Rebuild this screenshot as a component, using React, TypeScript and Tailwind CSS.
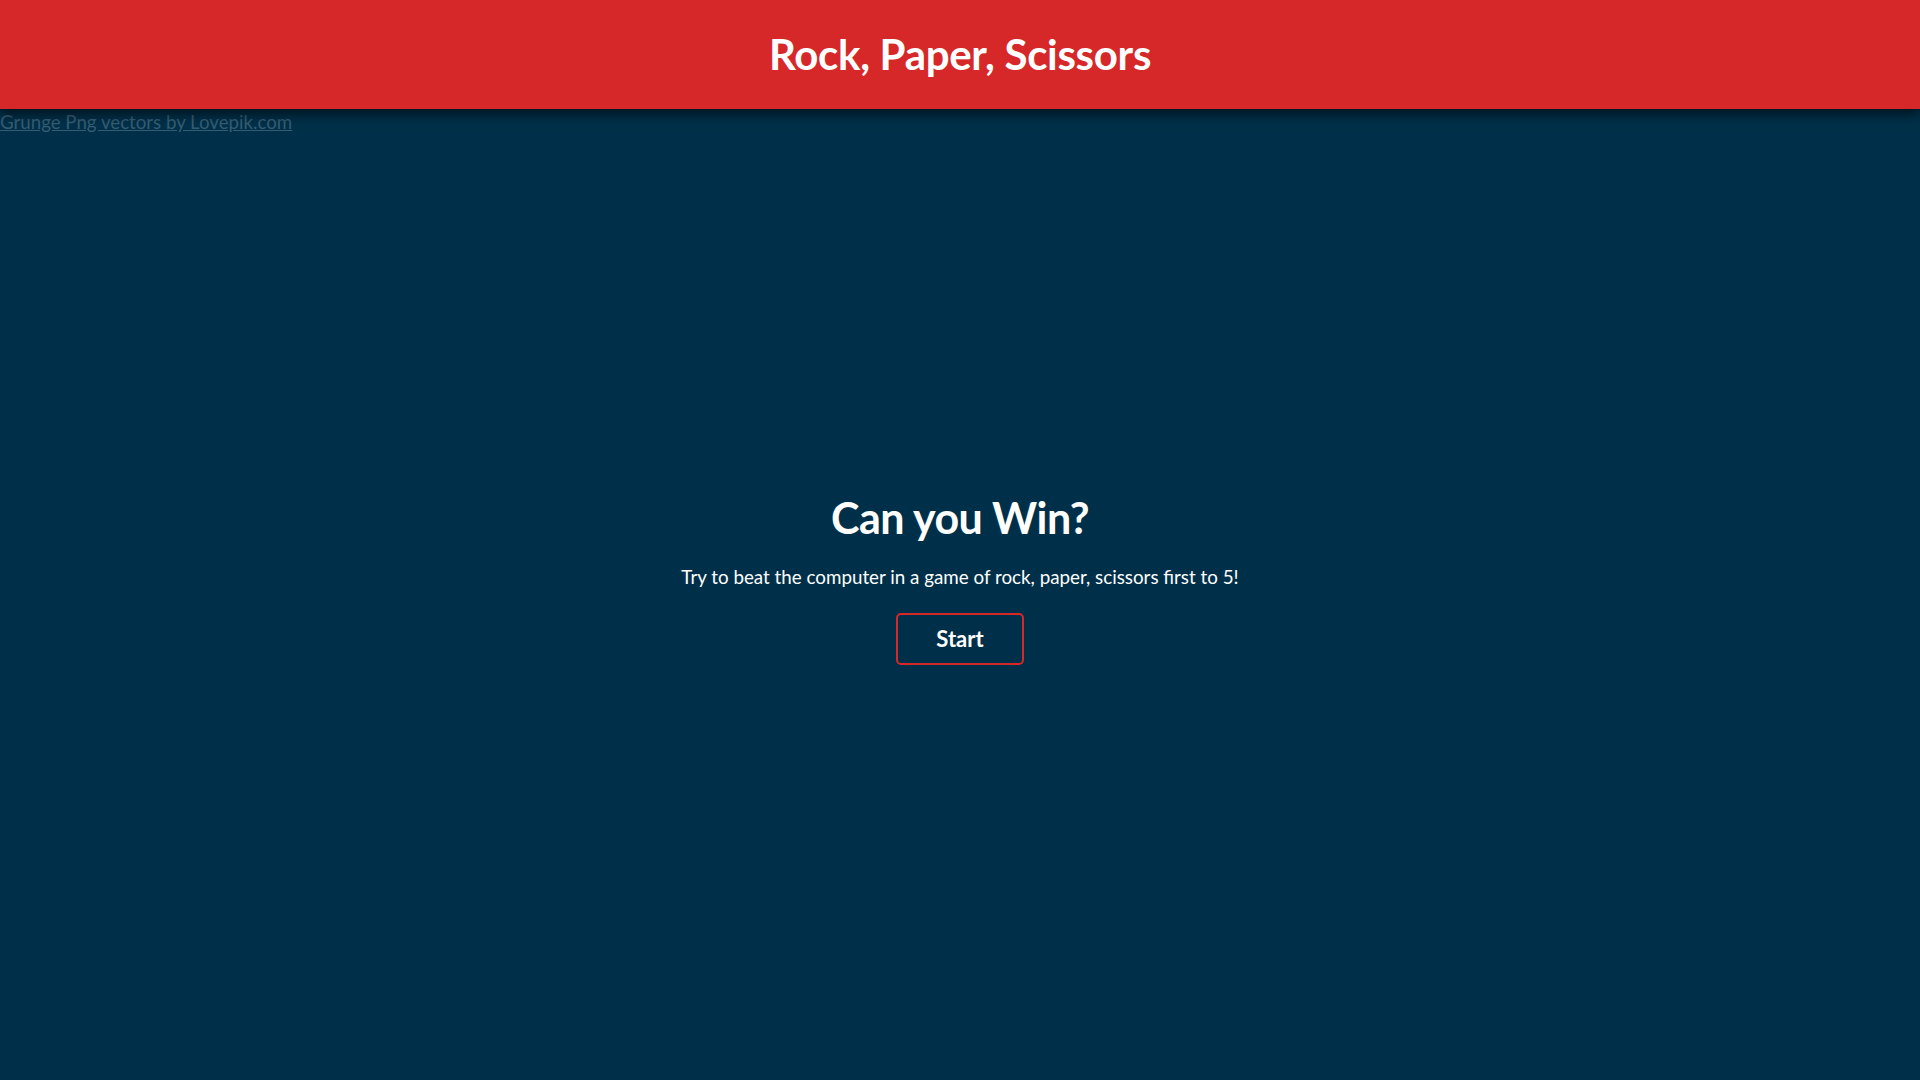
export default function App() {
  return (
    <div
      className="min-h-screen flex flex-col bg-[#003049] text-white"
      style={{ fontFamily: "Lato, 'Open Sans', sans-serif" }}
    >
      <header className="h-[109px] flex items-center justify-center bg-[#d62828] shadow-[0_4px_12px_rgba(0,0,0,0.7)] relative z-10">
        <h1 className="text-[42px] font-bold tracking-[-0.3px]">Rock, Paper, Scissors</h1>
      </header>
      <div className="h-[27px] text-[18.7px] leading-[26px]">
        <a href="#" className="text-[#365d74] underline">
          Grunge Png vectors by Lovepik.com
        </a>
      </div>
      <main className="flex-1 flex flex-col items-center justify-center pb-[58px]">
        <h2 className="text-[43px] font-bold leading-[48px] tracking-[-0.5px]">Can you Win?</h2>
        <p className="mt-[23px] text-[18.8px] leading-[24px]">
          Try to beat the computer in a game of rock, paper, scissors first to 5!
        </p>
        <button className="mt-[24px] w-[128px] h-[52px] rounded-[5px] border-2 border-[#d62828] text-[22px] font-bold">
          Start
        </button>
      </main>
    </div>
  );
}
